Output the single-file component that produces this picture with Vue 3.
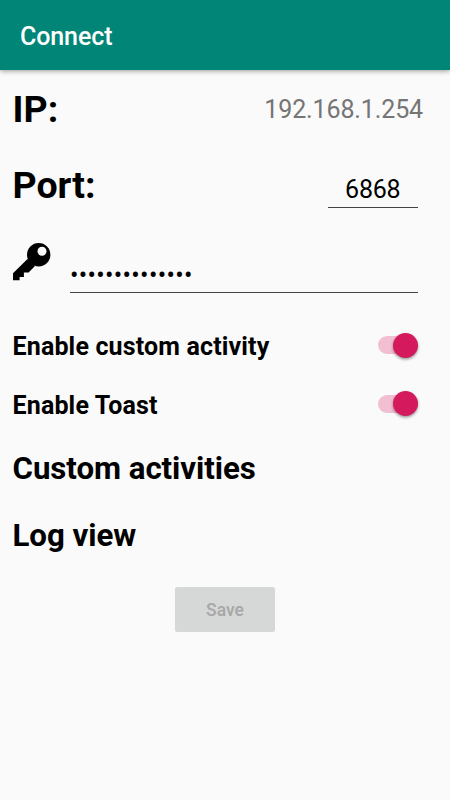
<template>
  <main class="connect-page">
    <header class="app-bar">Connect</header>

    <form class="settings" @submit.prevent>
      <div class="row row-ip">
        <span class="label">IP:</span>
        <span class="ip">{{ ip }}</span>
      </div>

      <div class="row row-port">
        <label class="label" for="port">Port:</label>
        <input id="port" v-model="port" class="field port" type="text" inputmode="numeric" />
      </div>

      <div class="row row-key">
        <svg class="key-icon" viewBox="0 0 38 38" aria-hidden="true">
          <path d="M14.5 16L0 30.3V37.3H6.6V34H10.9V29.6H15.6L22 23z" />
          <circle cx="25.7" cy="11.8" r="11.7" />
          <circle class="key-hole" cx="29" cy="8.3" r="4.5" />
        </svg>
        <input v-model="secret" class="field secret" type="password" aria-label="Key" />
      </div>

      <label v-for="item in switches" :key="item.name" class="row row-switch">
        <span>{{ item.name }}</span>
        <input v-model="item.on" type="checkbox" class="switch-input" />
        <span class="switch" :class="{ on: item.on }"><span class="thumb"></span></span>
      </label>

      <div class="row row-link">Custom activities</div>
      <div class="row row-link">Log view</div>

      <button class="save-btn" type="submit" disabled>Save</button>
    </form>
  </main>
</template>

<script setup>
import { ref } from 'vue';

const ip = ref('192.168.1.254');
const port = ref('6868');
const secret = ref('abcdefghijklmn');
const switches = ref([
  { name: 'Enable custom activity', on: true },
  { name: 'Enable Toast', on: true },
]);
</script>

<style>
body {
  margin: 0;
  background: #fafafa;
}
</style>

<style scoped>
.connect-page {
  min-height: 100vh;
  background: #fafafa;
  color: #000;
  font-family: Roboto, sans-serif;
  font-size: 25px;
}

.app-bar {
  box-sizing: border-box;
  height: 70px;
  padding-left: 20px;
  line-height: 74px;
  font-weight: 500;
  letter-spacing: -0.1px;
  color: #fff;
  background: #008577;
  box-shadow: 0 1px 5px rgba(0, 0, 0, 0.4);
}

.settings {
  display: flex;
  flex-direction: column;
}

.row {
  box-sizing: border-box;
  display: flex;
  align-items: center;
  justify-content: space-between;
  padding: 0 32.5px 0 12.5px;
}

.label {
  font-size: 37.5px;
  font-weight: 700;
}

.row-ip {
  height: 79px;
  padding-right: 27px;
}

.row-ip .label {
  margin-bottom: 2px;
}

.ip {
  letter-spacing: -0.12px;
  color: #757575;
}

.row-port {
  height: 72px;
}

.field {
  box-sizing: border-box;
  margin: 0;
  border: none;
  border-bottom: 1px solid #444;
  border-radius: 0;
  outline: none;
  background: transparent;
  color: #000;
  font-family: inherit;
  font-size: 25px;
}

.port {
  width: 89.5px;
  height: 39px;
  padding: 3px 0 0;
  margin-top: 7px;
  letter-spacing: -0.2px;
  text-align: center;
}

.row-key {
  height: 96px;
}

.key-icon {
  width: 38px;
  height: 38px;
  margin-bottom: 14px;
}

.key-hole {
  fill: #fafafa;
}

.secret {
  width: 347.5px;
  height: 41px;
  padding: 6px 0 0;
  margin-top: 7px;
  letter-spacing: 0.33px;
}

.row-switch {
  height: 58.5px;
  font-weight: 700;
  letter-spacing: 0.15px;
}

.row-switch + .row-switch > span:first-child {
  margin-top: 2px;
}

.switch-input {
  display: none;
}

.switch {
  display: flex;
  align-items: center;
  width: 40px;
  height: 18px;
  margin-bottom: 2px;
  border-radius: 9px;
  background: #c4c4c4;
}

.switch.on {
  justify-content: flex-end;
  background: #f1bfd1;
}

.thumb {
  width: 25px;
  height: 25px;
  flex: none;
  border-radius: 50%;
  background: #f1f1f1;
  box-shadow: 0 1.5px 3px rgba(0, 0, 0, 0.4);
}

.switch.on .thumb {
  background: #d4195d;
}

.row-link {
  height: 67px;
  padding-top: 1px;
  font-size: 31.25px;
  font-weight: 700;
  letter-spacing: -0.06px;
}

.save-btn {
  align-self: center;
  width: 100px;
  height: 45px;
  margin-top: 19px;
  padding: 1px 0 0;
  border: none;
  border-radius: 2.5px;
  background: #d6d7d7;
  color: #a6a7a7;
  font-family: inherit;
  font-size: 17.5px;
  font-weight: 500;
}
</style>
